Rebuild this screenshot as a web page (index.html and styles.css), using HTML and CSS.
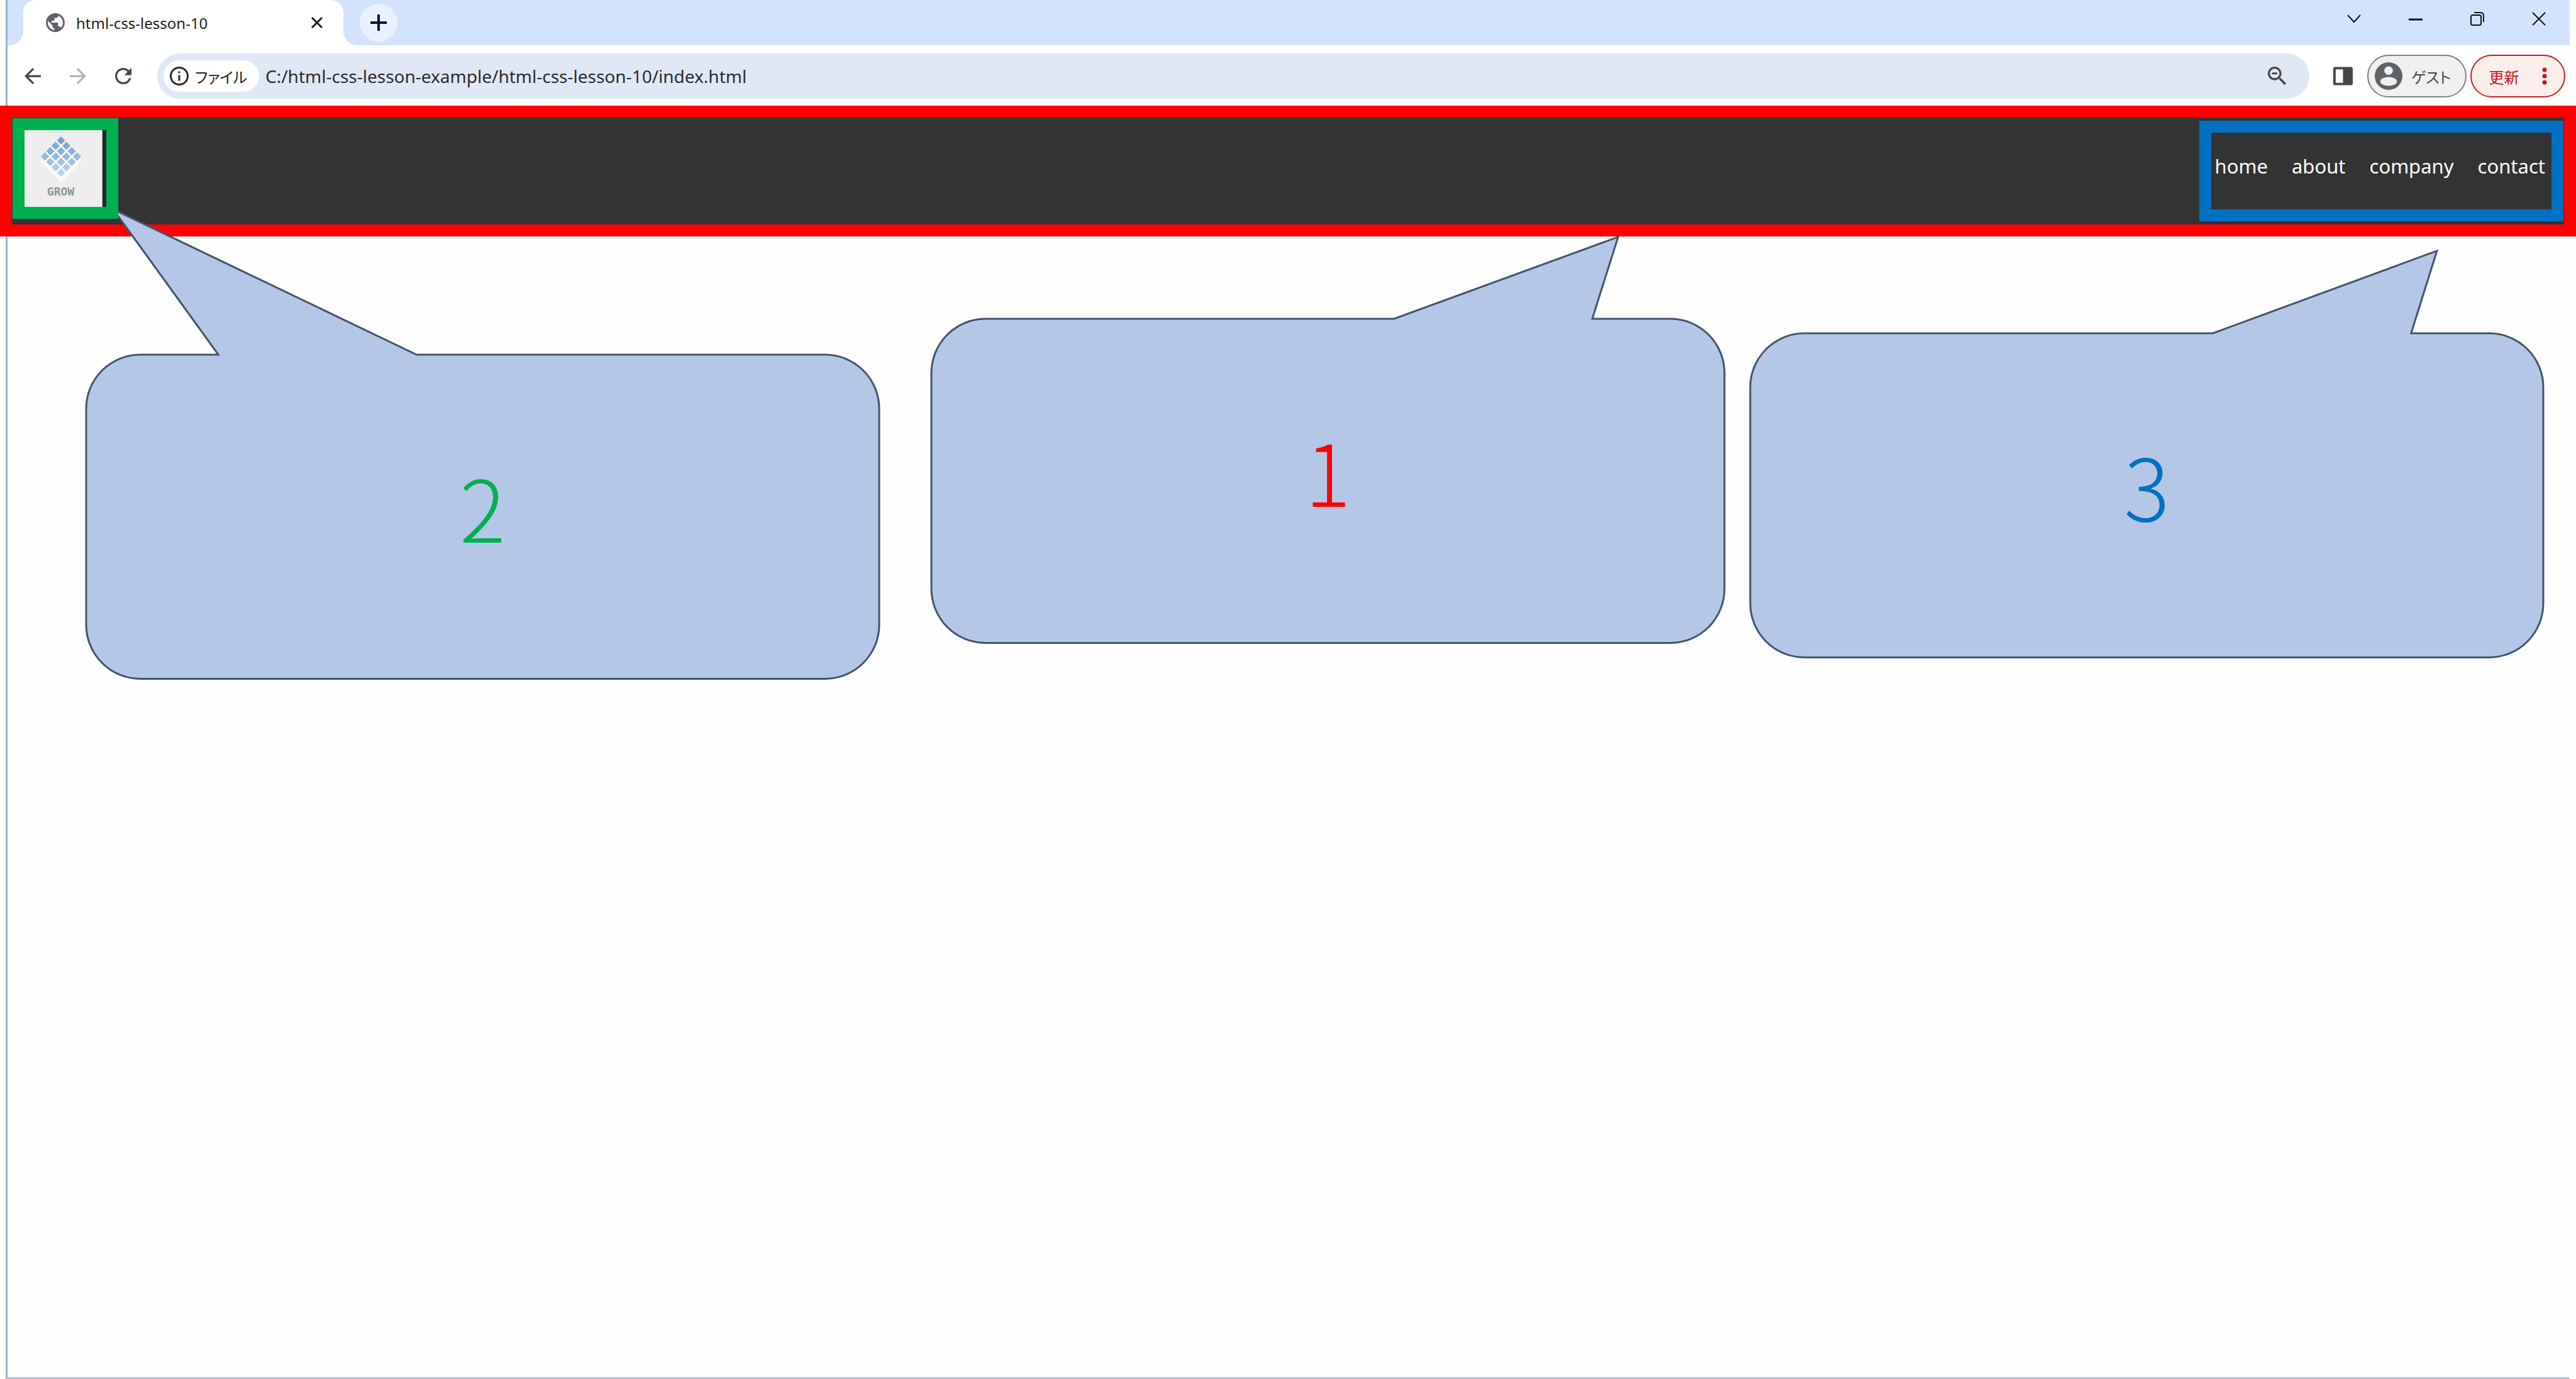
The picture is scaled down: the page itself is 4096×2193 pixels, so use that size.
FILE: index.html
```html
<!DOCTYPE html>
<html lang="ja">
<head>
<meta charset="utf-8">
<title>html-css-lesson-10</title>
<link rel="stylesheet" href="styles.css">
</head>
<body>
<div class="window">
  <div class="tabstrip">
    <div class="tab">
      <svg class="tab-icon" viewBox="2 2 20 20"><path fill="#5f6368" d="M12 2C6.48 2 2 6.48 2 12s4.48 10 10 10 10-4.48 10-10S17.52 2 12 2zm-1 17.93c-3.95-.49-7-3.85-7-7.93 0-.62.08-1.21.21-1.79L9 15v1c0 1.1.9 2 2 2v1.93zm6.9-2.54c-.26-.81-1-1.39-1.9-1.39h-1v-3c0-.55-.45-1-1-1H8v-2h2c.55 0 1-.45 1-1V7h2c1.1 0 2-.9 2-2v-.41c2.93 1.19 5 4.06 5 7.41 0 2.08-.8 3.97-2.1 5.39z"/></svg>
      <span class="tab-title">html-css-lesson-10</span>
      <button class="tab-close" aria-label="閉じる"><svg viewBox="0 0 18 18"><path d="M1 1l16 16M17 1L1 17" stroke="#1f1f1f" stroke-width="3" fill="none"/></svg></button>
    </div>
    <button class="new-tab" aria-label="新しいタブ"><svg viewBox="0 0 26 26"><path d="M13 0v26M0 13h26" stroke="#041040" stroke-width="4"/></svg></button>
    <div class="window-controls">
      <button aria-label="タブを検索"><svg viewBox="0 0 22 22"><path d="M1 5l10 11L21 5" /></svg></button>
      <button aria-label="最小化"><svg viewBox="0 0 22 22"><path d="M0 12h22" stroke-width="3"/></svg></button>
      <button aria-label="元に戻す"><svg viewBox="0 0 22 22"><rect x="1" y="5" width="16" height="16" rx="3"/><path d="M6 1h10q5 0 5 5v10"/></svg></button>
      <button aria-label="ウィンドウを閉じる"><svg viewBox="0 0 22 22"><path d="M1 1l20 20M21 1L1 21"/></svg></button>
    </div>
  </div>

  <div class="toolbar">
    <button class="nav-button" aria-label="戻る"><svg viewBox="4 4 16 16"><path fill="#474747" d="M20 11H7.83l5.59-5.59L12 4l-8 8 8 8 1.41-1.41L7.83 13H20v-2z"/></svg></button>
    <button class="nav-button" aria-label="進む"><svg viewBox="4 4 16 16"><path fill="#b3b3b3" d="M12 4l-1.41 1.41L16.17 11H4v2h12.17l-5.58 5.59L12 20l8-8z"/></svg></button>
    <button class="nav-button" aria-label="再読み込み"><svg viewBox="4 4 16 16"><path fill="#474747" d="M17.65 6.35C16.2 4.9 14.21 4 12 4c-4.42 0-7.99 3.58-7.99 8s3.57 8 7.99 8c3.73 0 6.84-2.55 7.73-6h-2.08c-.82 2.33-3.04 4-5.65 4-3.31 0-6-2.69-6-6s2.69-6 6-6c1.66 0 3.14.69 4.22 1.78L13 11h7V4l-2.35 2.35z"/></svg></button>
    <div class="omnibox">
      <button class="site-chip">
        <svg viewBox="2 2 20 20"><path fill="#2b2b2b" d="M11 7h2v2h-2zM11 11h2v6h-2zM12 2C6.48 2 2 6.48 2 12s4.48 10 10 10 10-4.48 10-10S17.52 2 12 2zm0 18c-4.41 0-8-3.59-8-8s3.59-8 8-8 8 3.59 8 8-3.59 8-8 8z"/></svg>
        <span>ファイル</span>
      </button>
      <input class="url" type="text" aria-label="アドレス" value="C:/html-css-lesson-example/html-css-lesson-10/index.html">
      <button class="zoom-button" aria-label="ズーム"><svg viewBox="3 3 18 18"><path fill="#474747" d="M15.5 14h-.79l-.28-.27C15.41 12.59 16 11.11 16 9.5 16 5.91 13.09 3 9.5 3S3 5.91 3 9.5 5.91 16 9.5 16c1.61 0 3.09-.59 4.23-1.57l.27.28v.79l5 4.99L20.49 19l-4.99-5zm-6 0C7.01 14 5 11.99 5 9.5S7.01 5 9.5 5 14 7.01 14 9.5 11.99 14 9.5 14zM7 8.6h5v1.8H7z"/></svg></button>
    </div>
    <button class="side-panel" aria-label="サイドパネル"><svg viewBox="0 0 32 30"><rect width="32" height="30" rx="3" fill="#474747"/><rect x="4" y="4" width="12" height="22" fill="#fff"/></svg></button>
    <button class="pill guest">
      <svg viewBox="2 2 20 20"><circle cx="12" cy="12" r="10" fill="#5f6368"/><circle cx="12" cy="8" r="3.1" fill="#f0f0f0"/><ellipse cx="12" cy="15.9" rx="6" ry="3.2" fill="#f0f0f0"/></svg>
      <span>ゲスト</span>
    </button>
    <button class="pill update">
      <span>更新</span>
      <svg viewBox="0 0 8 28"><circle cx="4" cy="4" r="3.5"/><circle cx="4" cy="14" r="3.5"/><circle cx="4" cy="24" r="3.5"/></svg>
    </button>
  </div>

  <main class="page">
    <header class="site-header">
      <a class="logo" href="#" aria-label="GROW">
        <span class="logo-card">
          <svg viewBox="-36 -8 72 82">
            <path fill="#fafafa" d="M0 0L34 34V42L0 78-34 42V34z"/>
            <g fill="#76a1d2"><path d="M0 0l7 7-7 7-7-7z"/></g>
            <g fill="#80a9d5"><path d="M-9 9l7 7-7 7-7-7zM9 9l7 7-7 7-7-7z"/></g>
            <g fill="#8aafd8"><path d="M-18 18l7 7-7 7-7-7zM0 18l7 7-7 7-7-7zM18 18l7 7-7 7-7-7z"/></g>
            <g fill="#98b8db"><path d="M-27 27l7 7-7 7-7-7zM-9 27l7 7-7 7-7-7zM9 27l7 7-7 7-7-7zM27 27l7 7-7 7-7-7z"/></g>
            <g fill="#a5c0df"><path d="M-18 36l7 7-7 7-7-7zM0 36l7 7-7 7-7-7zM18 36l7 7-7 7-7-7z"/></g>
            <g fill="#b2c9e3"><path d="M-9 45l7 7-7 7-7-7zM9 45l7 7-7 7-7-7z"/></g>
            <g fill="#bfd2e7"><path d="M0 54l7 7-7 7-7-7z"/></g>
          </svg>
          <span class="logo-name">GROW</span>
        </span>
      </a>
      <nav class="site-nav">
        <a href="#">home</a>
        <a href="#">about</a>
        <a href="#">company</a>
        <a href="#">contact</a>
      </nav>
    </header>

    <div class="callouts">
      <div class="callout callout-logo">
        <svg viewBox="0 0 1260 515"><path d="M86 0H210L43-231 525 0H1174A86 86 0 0 1 1260 86V429A86 86 0 0 1 1174 515H86A86 86 0 0 1 0 429V86A86 86 0 0 1 86 0Z"/></svg>
        <span>2</span>
      </div>
      <div class="callout callout-header">
        <svg viewBox="0 0 1260 515"><path d="M86 0H735L1091-130 1050 0H1174A86 86 0 0 1 1260 86V429A86 86 0 0 1 1174 515H86A86 86 0 0 1 0 429V86A86 86 0 0 1 86 0Z"/></svg>
        <span>1</span>
      </div>
      <div class="callout callout-nav">
        <svg viewBox="0 0 1260 515"><path d="M86 0H735L1091-131 1050 0H1174A86 86 0 0 1 1260 86V429A86 86 0 0 1 1174 515H86A86 86 0 0 1 0 429V86A86 86 0 0 1 86 0Z"/></svg>
        <span>3</span>
      </div>
    </div>
  </main>
</div>
</body>
</html>
```

FILE: styles.css
```css
* { box-sizing: border-box; }

body {
  margin: 0;
  background: #fff;
  font-family: "Noto Sans", "Noto Sans CJK JP", sans-serif;
  font-size: 24px;
  color: #1f1f1f;
}

button {
  display: flex;
  align-items: center;
  justify-content: center;
  flex: none;
  padding: 0;
  border: 0;
  background: none;
  font: inherit;
  color: inherit;
}

svg { display: block; flex: none; overflow: visible; }

.window {
  display: flex;
  flex-direction: column;
  min-height: 100vh;
  margin: 0 10px 0 9px;
  border-left: 3px solid #9ab0c8;
  border-bottom: 3px solid #b8c3cf;
}

/* Tab strip */
.tabstrip {
  display: flex;
  align-items: center;
  height: 72px;
  padding-left: 25px;
  background: #d3e3fd;
}

.tab {
  position: relative;
  display: flex;
  align-items: center;
  gap: 18px;
  width: 509px;
  height: 72px;
  padding: 0 33px 0 36px;
  border-radius: 20px 20px 0 0;
  background: #fff;
}

.tab::before,
.tab::after {
  content: "";
  position: absolute;
  bottom: 0;
  width: 24px;
  height: 24px;
}

.tab::before {
  right: 100%;
  background: radial-gradient(circle at 0 0, transparent 24px, #fff 25px);
}

.tab::after {
  left: 100%;
  background: radial-gradient(circle at 100% 0, transparent 24px, #fff 25px);
}

.tab-icon { width: 30px; height: 30px; }
.tab-title { flex: 1; }
.tab-close svg { width: 18px; height: 18px; }

.new-tab {
  width: 60px;
  height: 60px;
  margin-left: 26px;
  border-radius: 50%;
  background: #e9f1fe;
}

.new-tab svg { width: 26px; height: 26px; }

.window-controls {
  display: flex;
  align-self: flex-start;
  margin-left: auto;
}

.window-controls button { width: 98px; height: 60px; }

.window-controls svg {
  width: 22px;
  height: 22px;
  fill: none;
  stroke: #111;
  stroke-width: 2;
}

/* Toolbar */
.toolbar {
  display: flex;
  align-items: center;
  padding: 13px 7px 11px 4px;
  background: #fff;
}

.nav-button { width: 72px; height: 72px; }
.nav-button svg { width: 26px; height: 26px; }

.omnibox {
  display: flex;
  align-items: center;
  flex: 1;
  height: 72px;
  margin-left: 18px;
  padding: 0 36px 0 10px;
  border-radius: 36px;
  background: #e0e8f6;
}

.site-chip {
  justify-content: flex-start;
  gap: 10px;
  width: 152px;
  height: 50px;
  padding-left: 10px;
  border-radius: 25px;
  background: #fff;
  font-feature-settings: "palt";
}

.site-chip svg { width: 30px; height: 30px; }

.url {
  flex: 1;
  min-width: 0;
  margin-left: 10px;
  padding: 0;
  border: 0;
  outline: 0;
  background: none;
  font: inherit;
  font-size: 28px;
  color: #2b2b2b;
}

.zoom-button svg { width: 30px; height: 30px; }

.side-panel { margin-left: 38px; }
.side-panel svg { width: 31px; height: 30px; }

.pill {
  height: 68px;
  border-radius: 34px;
  font-feature-settings: "palt";
}

.guest {
  justify-content: flex-start;
  gap: 14px;
  width: 158px;
  margin-left: 23px;
  padding-left: 10px;
  border: 2px solid #808080;
  background: #f0f0f0;
  color: #474747;
}

.guest svg { width: 44px; height: 44px; }

.update {
  gap: 36px;
  width: 151px;
  margin-left: 6px;
  border: 2px solid #cf1d1d;
  background: #f9eeec;
  color: #c5161d;
}

.update svg { width: 8px; height: 28px; fill: #c5161d; }

/* Page */
.page { flex: 1; background: #fefefe; }

.site-header {
  display: flex;
  justify-content: space-between;
  align-items: center;
  height: 208px;
  margin: 0 -10px 0 -12px;
  padding: 0 1px;
  border: 19px solid #f00;
  background: #333;
}

.logo {
  position: relative;
  z-index: 2;
  align-self: flex-start;
  width: 168px;
  height: 160px;
  margin-top: 1px;
  border: 19px solid #00b050;
  background: #262626;
  text-decoration: none;
}

.logo-card {
  display: flex;
  flex-direction: column;
  align-items: center;
  width: 124px;
  height: 122px;
  padding: 2px 8px 0 0;
  border-right: 1px solid #bbb;
  background: #eee;
}

.logo-card svg { width: 68px; height: 78px; }

.logo-name {
  margin-top: 6px;
  font: bold 18px/24px "DejaVu Sans Mono", monospace;
  color: #8a9499;
}

.site-nav {
  display: flex;
  align-items: center;
  gap: 38px;
  height: 160px;
  padding: 0 10px 16px 6px;
  border: 19px solid #0070c0;
}

.site-nav a {
  font-size: 31px;
  color: #fff;
  text-decoration: none;
}

/* Callouts */
.callouts {
  display: flex;
  align-items: flex-start;
  padding: 131px 42px 0 125px;
}

.callout {
  position: relative;
  z-index: 1;
  display: grid;
  flex: 1 1 0;
  place-items: center;
}

.callout > * { grid-area: 1 / 1; }

.callout svg {
  width: 100%;
  fill: #b4c7e7;
  stroke: #44546a;
  stroke-width: 3;
}

.callout span {
  padding-bottom: 36px;
  font: 300 136px/196px "Noto Sans CJK JP", sans-serif;
  z-index: 1;
}

.callout-logo { margin-top: 57px; color: #00b050; }
.callout-header { margin: 0 41px 0 83px; color: #f00; }
.callout-nav { margin-top: 23px; color: #0070c0; }
```
